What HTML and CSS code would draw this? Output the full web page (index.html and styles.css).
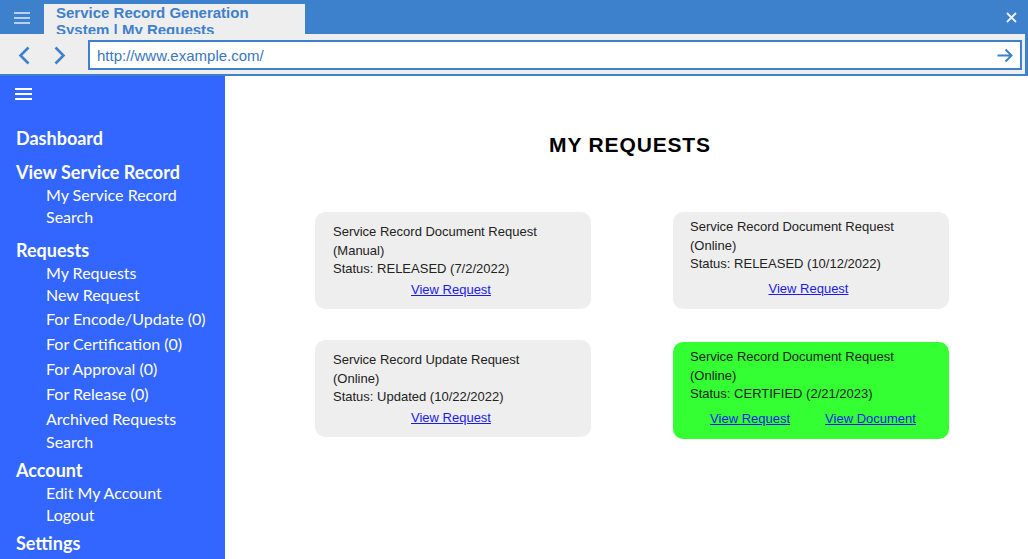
FILE: index.html
```html
<!DOCTYPE html>
<html lang="en">
<head>
<meta charset="utf-8">
<title>Service Record Generation System | My Requests</title>
<link rel="stylesheet" href="styles.css">
</head>
<body>
<div class="window">
  <header class="chrome">
    <div class="titlebar">
      <button class="menu-btn" aria-label="Menu">
        <svg width="16" height="12" viewBox="0 0 16 12"><rect x="0" y="0" width="16" height="2"/><rect x="0" y="5" width="16" height="2"/><rect x="0" y="10" width="16" height="2"/></svg>
      </button>
      <div class="tab">Service Record Generation System | My Requests</div>
      <div class="spacer"></div>
      <button class="close-btn" aria-label="Close">
        <svg width="11" height="11" viewBox="0 0 11 11"><path d="M1 1 L10 10 M10 1 L1 10"/></svg>
      </button>
    </div>
    <div class="navbar">
      <button class="nav-btn" aria-label="Back">
        <svg width="12" height="19" viewBox="0 0 12 19"><polyline points="10.5,1.5 2.5,9.5 10.5,17.5"/></svg>
      </button>
      <button class="nav-btn" aria-label="Forward">
        <svg width="12" height="19" viewBox="0 0 12 19"><polyline points="1.5,1.5 9.5,9.5 1.5,17.5"/></svg>
      </button>
      <div class="urlbar">
        <span class="url">http://www.example.com/</span>
        <svg class="go" width="16" height="15" viewBox="0 0 16 15"><path d="M0.5 7.5 H14.5 M8.5 1.5 L14.5 7.5 L8.5 13.5"/></svg>
      </div>
    </div>
  </header>

  <div class="app">
    <aside class="sidebar">
      <div class="side-toggle">
        <svg width="17" height="12" viewBox="0 0 17 12"><rect x="0" y="0" width="17" height="2"/><rect x="0" y="5" width="17" height="2"/><rect x="0" y="10" width="17" height="2"/></svg>
      </div>
      <nav class="menu">
        <div class="menu-group menu-group--first">
          <div class="menu-head">Dashboard</div>
        </div>
        <div class="menu-group">
          <div class="menu-head">View Service Record</div>
          <div class="menu-item">My Service Record</div>
          <div class="menu-item">Search</div>
        </div>
        <div class="menu-group">
          <div class="menu-head">Requests</div>
          <div class="menu-item">My Requests</div>
          <div class="menu-item">New Request</div>
          <div class="menu-item menu-item--tall">For Encode/Update (0)</div>
          <div class="menu-item menu-item--tall">For Certification (0)</div>
          <div class="menu-item menu-item--tall">For Approval (0)</div>
          <div class="menu-item menu-item--tall">For Release (0)</div>
          <div class="menu-item menu-item--tall">Archived Requests</div>
          <div class="menu-item">Search</div>
        </div>
        <div class="menu-group menu-group--tight">
          <div class="menu-head">Account</div>
          <div class="menu-item">Edit My Account</div>
          <div class="menu-item">Logout</div>
        </div>
        <div class="menu-group menu-group--tight">
          <div class="menu-head">Settings</div>
        </div>
      </nav>
    </aside>

    <main class="content">
      <h1 class="page-title">MY REQUESTS</h1>
      <div class="cards">
        <div class="card">
          <div class="card-text">
            <div>Service Record Document Request</div>
            <div>(Manual)</div>
            <div>Status: RELEASED (7/2/2022)</div>
          </div>
          <div class="card-links"><a href="#">View Request</a></div>
        </div>
        <div class="card card--online">
          <div class="card-text">
            <div>Service Record Document Request</div>
            <div>(Online)</div>
            <div>Status: RELEASED (10/12/2022)</div>
          </div>
          <div class="card-links"><a href="#">View Request</a></div>
        </div>
        <div class="card">
          <div class="card-text">
            <div>Service Record Update Request</div>
            <div>(Online)</div>
            <div>Status: Updated (10/22/2022)</div>
          </div>
          <div class="card-links"><a href="#">View Request</a></div>
        </div>
        <div class="card card--online card--certified">
          <div class="card-text">
            <div>Service Record Document Request</div>
            <div>(Online)</div>
            <div>Status: CERTIFIED (2/21/2023)</div>
          </div>
          <div class="card-links card-links--pair"><a href="#">View Request</a><a href="#">View Document</a></div>
        </div>
      </div>
    </main>
  </div>
</div>
</body>
</html>
```

FILE: styles.css
```css
* { box-sizing: border-box; }

html, body {
  margin: 0;
  padding: 0;
  width: 1028px;
  height: 559px;
  overflow: hidden;
  background: #ffffff;
}

body {
  font-family: "Liberation Sans", Arial, sans-serif;
}

button {
  border: 0;
  background: none;
  padding: 0;
  margin: 0;
  cursor: pointer;
}

.window {
  display: flex;
  flex-direction: column;
  height: 559px;
}

/* ---------- browser chrome ---------- */
.chrome {
  background: #3d80cc;
  padding-bottom: 2px;
}

.titlebar {
  height: 34px;
  display: flex;
  align-items: flex-start;
}

.menu-btn {
  width: 44px;
  height: 34px;
  display: flex;
  align-items: center;
  justify-content: center;
  padding-top: 1px;
}

.menu-btn svg { fill: #b8cfee; display: block; }

.tab {
  margin-top: 4px;
  width: 261px;
  height: 30px;
  background: #eeeeee;
  padding: 0 20px 0 12px;
  overflow: hidden;
  color: #3d80cc;
  font-weight: bold;
  font-size: 15px;
  line-height: 17px;
}

.spacer { flex: 1; }

.close-btn {
  width: 11px;
  height: 11px;
  margin: 12px 11px 0 0;
}

.close-btn svg {
  display: block;
  stroke: #eef3fb;
  stroke-width: 1.8;
  fill: none;
}

.navbar {
  height: 40px;
  margin-right: 3px;
  background: #eeeeee;
  display: flex;
  align-items: flex-start;
  padding: 6px 3px 0 6px;
}

.nav-btn {
  width: 36px;
  height: 30px;
  display: flex;
  align-items: center;
  justify-content: center;
}

.nav-btn svg {
  display: block;
  fill: none;
  stroke: #3d80cc;
  stroke-width: 2.6;
}

.urlbar {
  flex: 1;
  margin-left: 10px;
  height: 30px;
  border: 2px solid #3d80cc;
  background: #ffffff;
  display: flex;
  align-items: center;
  padding: 0 7px 0 7px;
}

.url {
  flex: 1;
  font-size: 15px;
  color: #3b76bf;
}

.go {
  display: block;
  fill: none;
  stroke: #3d80cc;
  stroke-width: 2;
}

/* ---------- app ---------- */
.app {
  flex: 1;
  display: flex;
  min-height: 0;
}

.sidebar {
  width: 225px;
  flex: none;
  background: #3366ff;
  color: #ffffff;
  font-family: Lato, "Liberation Sans", sans-serif;
  padding-top: 12px;
}

.side-toggle {
  padding-left: 15px;
  height: 12px;
}

.side-toggle svg { display: block; fill: #ffffff; }

.menu { display: flex; flex-direction: column; }

.menu-group { margin-top: 10px; }
.menu-group--first { margin-top: 26px; }
.menu-group--tight { margin-top: 5px; }

.menu-head {
  padding-left: 16px;
  font-size: 18px;
  font-weight: bold;
  line-height: 24px;
  white-space: nowrap;
}

.menu-item {
  padding-left: 46px;
  font-size: 16px;
  line-height: 22px;
  white-space: nowrap;
}

.menu-item--tall { line-height: 25px; }

/* ---------- content ---------- */
.content {
  flex: 1;
  padding: 57px 0 0 7px;
}

.page-title {
  margin: 0;
  text-align: center;
  font-size: 21px;
  line-height: 24px;
  font-weight: bold;
  color: #000000;
  letter-spacing: 0.85px;
}

.cards {
  margin: 55px 0 0 83px;
  display: grid;
  grid-template-columns: 276px 276px;
  column-gap: 82px;
  row-gap: 31px;
  align-items: start;
}

.card {
  height: 97px;
  background: #eeeeee;
  border-radius: 10px;
  padding: 11px 22px 0 18px;
  font-size: 13px;
  line-height: 18.5px;
  color: #222222;
}

.card--online {
  padding-top: 6px;
  padding-left: 17px;
}

.card-links {
  margin-top: 2px;
  display: flex;
  justify-content: center;
  gap: 35px;
}

.card--online .card-links { margin-top: 6px; }

.card-links--pair { padding-left: 9px; }

.card-links a {
  color: #1a1aee;
  text-decoration: underline;
}

.card--certified {
  background: #33ff33;
  margin-top: 2px;
}
```
